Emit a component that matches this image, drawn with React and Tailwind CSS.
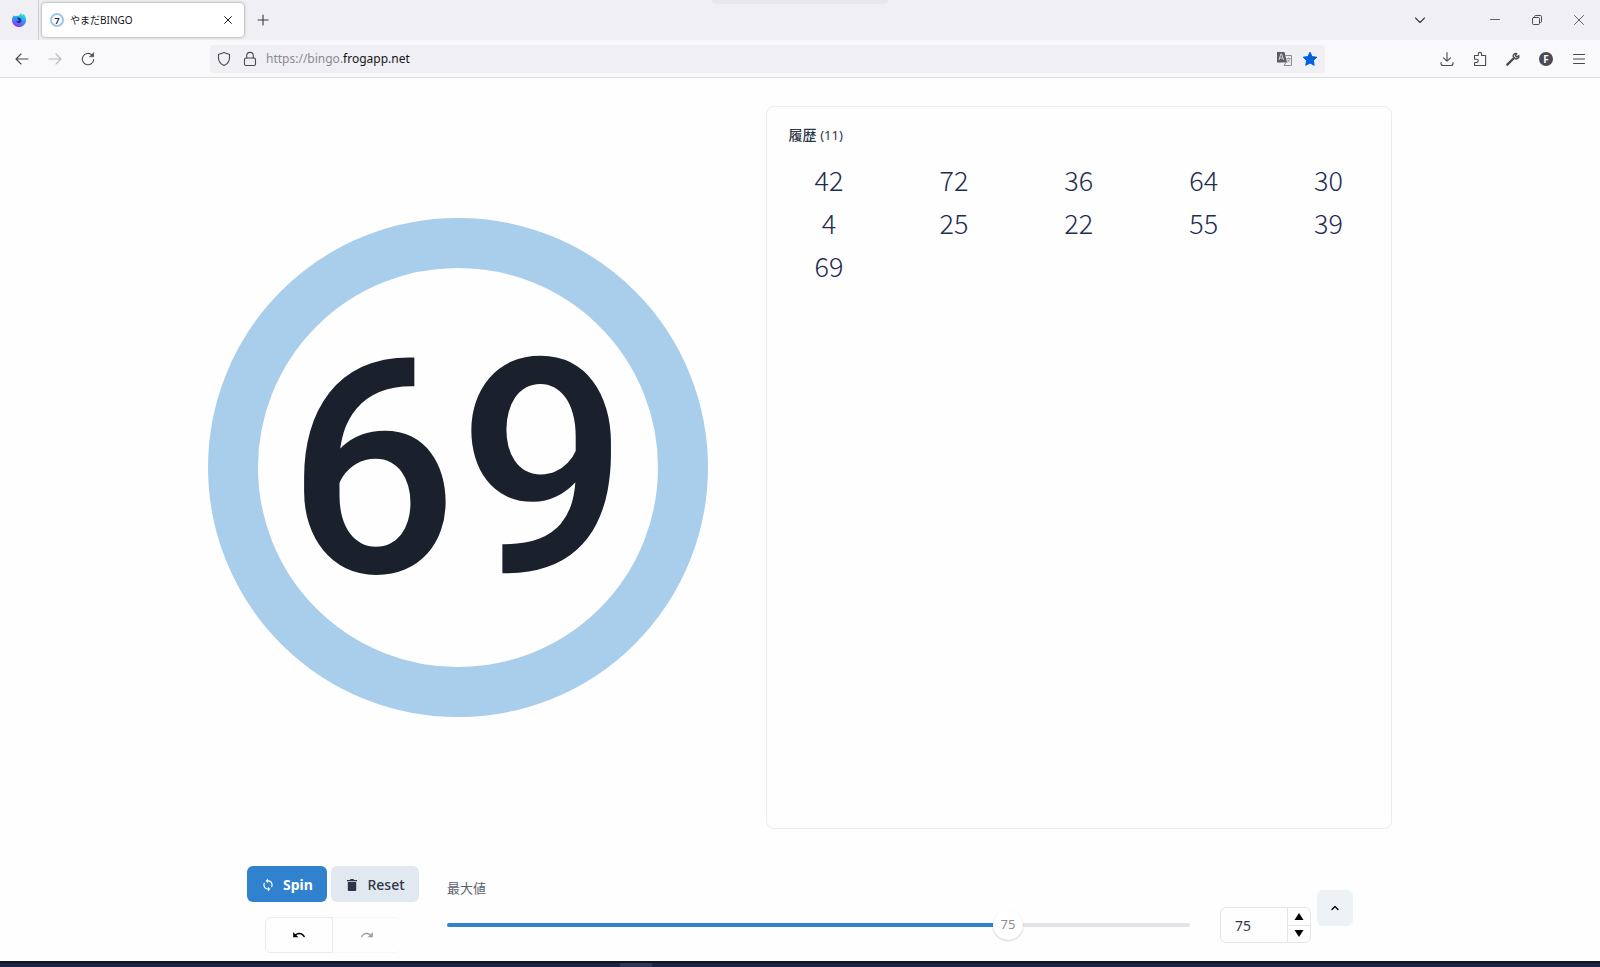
import { useState } from "react";
import { MdSync, MdUndo, MdRedo } from "react-icons/md";

const HISTORY = [42, 72, 36, 64, 30, 4, 25, 22, 55, 39, 69];

function Icon({ className = "size-4", children, width = 1.1 }) {
  return (
    <svg viewBox="0 0 16 16" className={className} fill="none" stroke="currentColor" strokeWidth={width} strokeLinecap="round" strokeLinejoin="round" aria-hidden="true">
      {children}
    </svg>
  );
}

function IconButton({ label, className = "", children, ...rest }) {
  return (
    <button type="button" aria-label={label} className={`flex shrink-0 items-center justify-center ${className}`} {...rest}>
      {children}
    </button>
  );
}

function TabStrip() {
  return (
    <div className="relative flex h-10 items-stretch bg-[#f0f0f4] text-[#3a3944]">
      <div className="absolute top-0 left-1/2 h-1 w-44 -translate-x-1/2 rounded-b bg-[#e7e6eb]" />
      <IconButton label="Firefox View" className="w-[39px] border-r border-[#cfcfd8]">
        <svg viewBox="0 0 16 16" className="size-4" aria-hidden="true">
          <defs>
            <linearGradient id="fox" x1="0.8" y1="0" x2="0.4" y2="1">
              <stop offset="0" stopColor="#2ff5d4" />
              <stop offset="0.5" stopColor="#2a9cf5" />
              <stop offset="1" stopColor="#9a36ee" />
            </linearGradient>
          </defs>
          <path d="M9.500 1c1 .6 1.600 1.300 2 2 .5-.2.700-.7.700-1.200C14.200 3.200 15 5.500 15 8.200 15 12 11.900 15 8 15s-7-3-7-6.800C1 6 2 4 3 3c0 .6.100 1 .3 1.300C4.500 3.600 5.500 3.600 6.500 4 8 3.600 9.500 2.800 9.500 1z" fill="url(#fox)" />
          <path d="M6.200 5.800c2-.6 4.300.3 4.300 2.600 0 1.700-1.300 2.600-2.800 2.600C6.200 11 5.400 9.900 5.400 8.800c.7.500 1.500.4 2-.1.600-.4.400-.9-.2-1C6.200 7.500 6.500 6.500 6.200 5.800z" fill="#24308f" />
        </svg>
      </IconButton>
      <div className="my-[3px] ml-[3px] flex w-[202px] items-center rounded bg-white px-2 shadow-[0_0_3px_rgba(0,0,0,0.45)]">
        <span className="flex size-[14px] items-center justify-center rounded-full border-2 border-[#9cc7ea] text-[9px] leading-none font-semibold text-[#1a202c]">7</span>
        <span className="ml-1.5 flex-1 text-[10px] text-[#15141a]">やまだBINGO</span>
        <IconButton label="Close tab" className="size-4 text-[#15141a]">
          <Icon className="size-3" width={1.3}><path d="M3.500 3.500l9 9M12.500 3.500l-9 9" /></Icon>
        </IconButton>
      </div>
      <IconButton label="New tab" className="ml-[3px] w-8">
        <Icon><path d="M8 3v10M3 8h10" /></Icon>
      </IconButton>
      <div className="flex-1" />
      <IconButton label="List all tabs" className="mr-[38px] w-8"><Icon><path d="M3.500 6L8 10.500 12.500 6" /></Icon></IconButton>
      <IconButton label="Minimize" className="w-[42px]"><Icon width={0.8}><path d="M3.500 7.500h9" /></Icon></IconButton>
      <IconButton label="Restore" className="w-[42px]">
        <Icon width={0.9}><rect x="3.500" y="5.500" width="7" height="7" rx="1" /><path d="M5.500 5.500v-1a1 1 0 011-1h5a1 1 0 011 1v5a1 1 0 01-1 1h-1" /></Icon>
      </IconButton>
      <IconButton label="Close window" className="w-[42px]"><Icon width={0.8}><path d="M3.500 3.500l9 9M12.500 3.500l-9 9" /></Icon></IconButton>
    </div>
  );
}

function NavBar() {
  return (
    <div className="flex h-[38px] items-center border-b border-[#dcdce0] bg-[#f9f9fb] pr-[5px] pl-[6px] text-[#4a4954]">
      <div className="flex w-[204px] items-center gap-px">
        <IconButton label="Back" className="size-8"><Icon><path d="M14 8H2M7 3L2 8l5 5" /></Icon></IconButton>
        <IconButton label="Forward" className="size-8 text-[#b9b9bf]" disabled><Icon><path d="M2 8h12M9 3l5 5-5 5" /></Icon></IconButton>
        <IconButton label="Reload" className="size-8"><Icon><path d="M13.700 8.500a5.700 5.700 0 11-1.800-4.600" /><path d="M13.700 1.800v4H9.700z" fill="currentColor" strokeWidth="0.500" /></Icon></IconButton>
      </div>
      <div className="flex h-7 flex-1 items-center rounded bg-[#f0f0f4] pr-[3px] pl-1.5">
        <Icon><path d="M8 1.500l5.500 2v3.500c0 3.500-2.300 6-5.500 7.500C4.800 13 2.500 10.500 2.500 7V3.500z" /></Icon>
        <Icon className="ml-[10px] size-4"><rect x="2.500" y="7" width="11" height="7.500" rx="1.500" /><path d="M4.700 7V4.700a3.300 3.300 0 016.600 0V7" /></Icon>
        <a href="https://bingo.frogapp.net" className="ml-2 flex-1 text-[12px] text-[#8a8a92]">https://bingo.<span className="text-[#15141a]">frogapp.net</span></a>
        <IconButton label="Translate" className="size-6">
          <svg viewBox="0 0 16 16" className="size-4" aria-hidden="true">
            <path d="M1 1h7.500l2.500 10.500H1z" fill="#5b5b66" />
            <path d="M3 9l1.800-6h.9L7.500 9M3.700 7h3" stroke="#d8d8de" fill="none" />
            <path d="M9.500 4.500h6v10H8l2-3" stroke="#8a8a92" fill="none" />
            <path d="M10.500 7.500h4M12.500 6.500v1M14 7.500c-.5 2-2 3.300-3.200 4M11.300 8.500c.6 1.300 1.500 2.200 2.700 3" stroke="#8a8a92" fill="none" strokeWidth=".8" />
          </svg>
        </IconButton>
        <IconButton label="Bookmark" className="ml-0.5 size-6 text-[#0060df]">
          <svg viewBox="0 0 16 16" className="size-4" fill="currentColor" stroke="currentColor" strokeLinejoin="round" aria-hidden="true">
            <path d="M8 1.200l2.100 4.400 4.700.6-3.400 3.300.8 4.800L8 12l-4.200 2.300.8-4.800L1.200 6.200l4.700-.6z" />
          </svg>
        </IconButton>
      </div>
      <div className="ml-[106px] flex items-center gap-px">
        <IconButton label="Downloads" className="size-8"><Icon><path d="M8 1.500v8.500M4.500 6.800L8 10.200l3.500-3.400M2 11.500v1a2 2 0 002 2h8a2 2 0 002-2v-1" /></Icon></IconButton>
        <IconButton label="Extensions" className="size-8"><Icon><path d="M2.500 7V4.500h3.800V3a1.600 1.600 0 013.300 0v1.500h4v10h-11V11.500h2a1.600 1.600 0 000-3.300h-2z" /></Icon></IconButton>
        <IconButton label="Developer tools" className="size-8">
          <Icon><path d="M2.300 13.700L8.500 7.500" strokeWidth="2.400" /><path d="M13.800 4.600l-2 1.400-1.500-1.500 1.400-2c-2-.6-3.800 1-3.500 3l2.400 2.400c2 .3 3.800-1.300 3.200-3.300z" strokeWidth="1.400" /></Icon>
        </IconButton>
        <IconButton label="Account" className="size-8"><span className="flex size-[14px] items-center justify-center rounded-full bg-[#4a4954] text-[10px] leading-none font-bold text-white">F</span></IconButton>
        <IconButton label="Menu" className="size-8"><Icon><path d="M2.500 3.500h11M2.500 8h11M2.500 12.500h11" /></Icon></IconButton>
      </div>
    </div>
  );
}

function Controls() {
  const [max, setMax] = useState(75);
  const percent = ((max - 1) / 98) * 100;
  const change = (n) => setMax(Math.min(99, Math.max(1, n || 1)));
  return (
    <div className="mx-auto flex w-full max-w-[1184px] items-start px-[39px]">
      <div className="flex w-[172px] shrink-0 flex-col items-center gap-[15px]">
        <div className="flex w-full gap-1">
          <button type="button" className="flex h-9 w-20 items-center justify-center gap-2 rounded-md bg-[#3182ce] pt-0.5 text-sm font-bold text-white">
            <MdSync className="size-[14px]" />Spin
          </button>
          <button type="button" className="flex h-9 flex-1 items-center justify-center gap-2 rounded-md bg-[#e2e8f0] pt-0.5 text-sm font-medium text-[#2d3748]">
            <svg viewBox="0 0 14 14" className="size-[14px]" fill="currentColor" aria-hidden="true"><path d="M5.200 1h3.600v1H12v1.300H2V2h3.200zM2.800 4h8.400v7.700c0 .8-.5 1.300-1.300 1.300H4.100c-.8 0-1.300-.5-1.300-1.300z" /></svg>
            Reset
          </button>
        </div>
        <div className="flex">
          <IconButton label="Undo" className="h-9 w-[68px] rounded-l-md border border-[#e8ecf1] text-black"><MdUndo className="size-[14px]" /></IconButton>
          <IconButton label="Redo" className="h-9 w-[68px] rounded-r-md border-y border-[#f6f8fa] text-[#a0a0a0]" disabled><MdRedo className="size-[14px]" /></IconButton>
        </div>
      </div>
      <div className="ml-7 min-w-0 flex-1 pt-3">
        <label htmlFor="max" className="block text-[13px] leading-5 text-[#5a6270]">最大値</label>
        <div className="relative mt-3 flex h-[30px] items-center">
          <div className="h-1 w-full overflow-hidden rounded-sm bg-[#e2e4e8]">
            <div className="h-full bg-[#3182ce]" style={{ width: `${percent}%` }} />
          </div>
          <input id="max" type="range" min="1" max="99" value={max} onChange={(e) => change(+e.target.value)}
            className="absolute inset-y-0 -left-[15px] w-[calc(100%+30px)] appearance-none bg-transparent [&::-webkit-slider-thumb]:size-[30px] [&::-webkit-slider-thumb]:appearance-none [&::-webkit-slider-thumb]:rounded-full [&::-webkit-slider-thumb]:bg-white [&::-webkit-slider-thumb]:shadow-[0_1px_2px_rgba(0,0,0,0.2)]" />
          <output htmlFor="max" className="pointer-events-none absolute -translate-x-1/2 text-[13px] text-[#8a8f98]" style={{ left: `${percent}%` }}>{max}</output>
        </div>
      </div>
      <div className="mt-[41px] ml-[30px] flex h-9 w-[91px] shrink-0 overflow-hidden rounded-md border border-[#e2e6eb]">
        <input aria-label="最大値" inputMode="numeric" value={max} onChange={(e) => change(+e.target.value)} className="min-w-0 flex-1 bg-transparent pt-0.5 pl-[14px] text-sm text-[#2d3748] outline-none" />
        <div className="flex w-[23px] flex-col border-l border-[#e2e6eb] text-black">
          <IconButton label="Increase" className="flex-1 border-b border-[#e2e6eb]" onClick={() => change(max + 1)}><svg viewBox="0 0 10 7" className="h-[7px] w-[10px]" fill="currentColor"><path d="M5 0l4.500 7h-9z" /></svg></IconButton>
          <IconButton label="Decrease" className="flex-1" onClick={() => change(max - 1)}><svg viewBox="0 0 10 7" className="h-[7px] w-[10px]" fill="currentColor"><path d="M5 7L.5 0h9z" /></svg></IconButton>
        </div>
      </div>
      <IconButton label="Collapse" className="mt-6 ml-1.5 size-9 rounded-md bg-[#edf2f7] text-black">
        <Icon className="size-3" width={1.8}><path d="M4 10l4-4 4 4" /></Icon>
      </IconButton>
    </div>
  );
}

export default function App() {
  return (
    <div className="flex min-h-screen flex-col bg-[#fefefe] font-['Noto_Sans','Noto_Sans_CJK_JP',sans-serif]">
      <header>
        <TabStrip />
        <NavBar />
      </header>
      <main className="flex flex-1 flex-col px-6 pb-2">
        <div className="mx-auto mt-7 mb-[37px] flex w-full max-w-[1184px] flex-1 gap-[58px]">
          <div className="flex flex-4 basis-0 items-center">
            <div className="flex aspect-square w-full items-center justify-center rounded-full border-[50px] border-[#a9ceec] pt-1 font-['Roboto','Noto_Sans',sans-serif] text-[300px] leading-none font-medium text-[#1a202c]">69</div>
          </div>
          <section className="flex-5 basis-0 rounded-lg border border-[#ececef]">
            <h1 className="mt-4 ml-[22px] text-sm leading-6 text-[#2d3748]"><span className="font-medium">履歴</span> <span className="text-[13px]">(11)</span></h1>
            <ol className="mt-[11px] grid grid-cols-5 text-center font-['Noto_Sans_CJK_JP',sans-serif] text-[27px] leading-[43px] font-light text-[#1f2d52]">
              {HISTORY.map((n) => <li key={n}>{n}</li>)}
            </ol>
          </section>
        </div>
        <Controls />
      </main>
      <footer className="flex h-[6px] border-t-2 border-[#10151c] bg-[#172444] pl-[620px]">
        <div className="h-1 w-8 bg-[#2b3858]" />
      </footer>
    </div>
  );
}
